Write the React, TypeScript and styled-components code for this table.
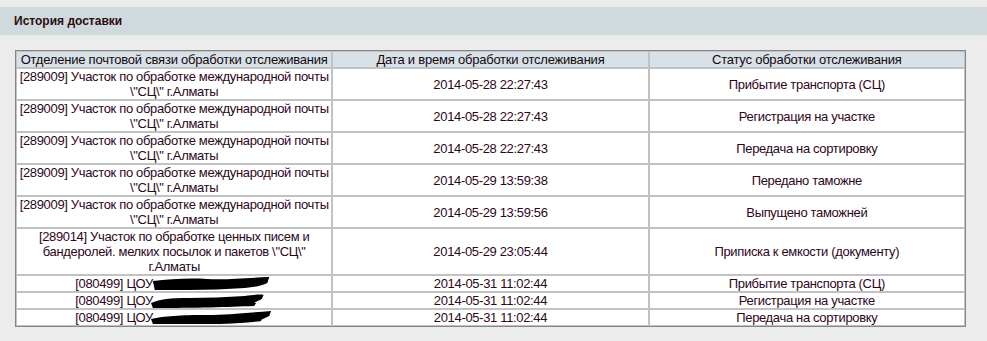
import React from "react";
import styled, { createGlobalStyle } from "styled-components";

const Global = createGlobalStyle`
  html, body { margin: 0; padding: 0; }
  body {
    background: #ececec;
    font-family: "Liberation Sans", Arial, sans-serif;
  }
`;

const Page = styled.div`
  padding-top: 7px;
  width: 987px;
  height: 341px;
  box-sizing: border-box;
`;

const HeaderBar = styled.div`
  height: 28px;
  background: #d0d9dd;
  display: flex;
  align-items: center;
  padding-left: 14px;
  font-size: 12px;
  font-weight: bold;
  color: #2a0d0d;
`;

const Content = styled.div`
  padding: 15px 21px 0 15px;
`;

const Table = styled.table`
  width: 100%;
  border-collapse: separate;
  border-spacing: 0;
  table-layout: fixed;
  border: 1px solid #858585;
  background: #ffffff;
  font-size: 13px;
  letter-spacing: -0.22px;
  line-height: 15px;
`;

const Th = styled.th`
  background: #d8e0e8;
  border: 1px solid #c2c2c2;
  padding: 0;
  font-weight: normal;
  color: #140a0e;
  text-align: center;
  white-space: nowrap;
`;

const Td = styled.td`
  border: 1px solid #c2c2c2;
  padding: 0;
  text-align: center;
  vertical-align: middle;
  color: #2e0620;
  letter-spacing: -0.34px;
`;

const Redact = styled.svg`
  display: inline-block;
  vertical-align: middle;
  margin-left: -5px;
  margin-top: -2px;
`;

type Row = { office: React.ReactNode; date: string; status: string };

const Scribble: React.FC<{ variant: number }> = ({ variant }) => {
  const paths = [
    "M2 4 C20 2 40 1 60 2 C80 3 100 1 126 0 L124 6 C118 9 110 10 100 11 C80 12 60 13 40 13 C25 13 12 13 4 13 Z",
    "M0 9 C10 5 20 4 40 4 C60 4 80 3 100 2 C110 1 116 0 120 1 L118 5 C112 8 108 9 112 9 L110 12 C80 13 50 14 2 14 Z",
    "M0 8 C15 5 30 4 60 4 C80 4 100 2 128 0 L126 5 C120 8 115 9 118 10 C100 12 80 13 60 13 C40 13 20 13 2 13 Z",
  ];
  return (
    <Redact width="122" height="14" viewBox="0 0 130 14" preserveAspectRatio="none">
      <path d={paths[variant]} fill="#000" />
    </Redact>
  );
};

const mp = '[289009] Участок по обработке международной почты \\"СЦ\\" г.Алматы';

const rows: Row[] = [
  { office: mp, date: "2014-05-28 22:27:43", status: "Прибытие транспорта (СЦ)" },
  { office: mp, date: "2014-05-28 22:27:43", status: "Регистрация на участке" },
  { office: mp, date: "2014-05-28 22:27:43", status: "Передача на сортировку" },
  { office: mp, date: "2014-05-29 13:59:38", status: "Передано таможне" },
  { office: mp, date: "2014-05-29 13:59:56", status: "Выпущено таможней" },
  {
    office: '[289014] Участок по обработке ценных писем и бандеролей. мелких посылок и пакетов \\"СЦ\\" г.Алматы',
    date: "2014-05-29 23:05:44",
    status: "Приписка к емкости (документу)",
  },
  {
    office: (
      <>
        [080499] ЦОУ <Scribble variant={0} />
      </>
    ),
    date: "2014-05-31 11:02:44",
    status: "Прибытие транспорта (СЦ)",
  },
  {
    office: (
      <>
        [080499] ЦОУ <Scribble variant={1} />
      </>
    ),
    date: "2014-05-31 11:02:44",
    status: "Регистрация на участке",
  },
  {
    office: (
      <>
        [080499] ЦОУ <Scribble variant={2} />
      </>
    ),
    date: "2014-05-31 11:02:44",
    status: "Передача на сортировку",
  },
];

export default function App() {
  return (
    <Page>
      <Global />
      <HeaderBar>История доставки</HeaderBar>
      <Content>
        <Table>
          <thead>
            <tr>
              <Th>Отделение почтовой связи обработки отслеживания</Th>
              <Th>Дата и время обработки отслеживания</Th>
              <Th>Статус обработки отслеживания</Th>
            </tr>
          </thead>
          <tbody>
            {rows.map((r, i) => (
              <tr key={i}>
                <Td>{r.office}</Td>
                <Td>{r.date}</Td>
                <Td>{r.status}</Td>
              </tr>
            ))}
          </tbody>
        </Table>
      </Content>
    </Page>
  );
}
